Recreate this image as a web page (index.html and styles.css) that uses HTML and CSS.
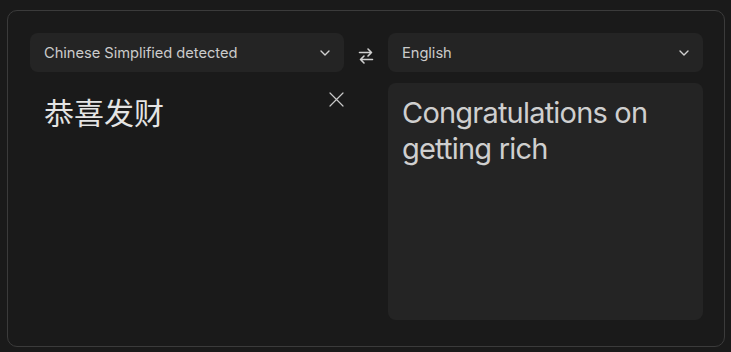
FILE: index.html
```html
<!DOCTYPE html>
<html lang="en">
<head>
<meta charset="utf-8">
<link rel="stylesheet" href="styles.css">
</head>
<body>
<div class="card">
  <div class="select">
    <span>Chinese Simplified detected</span>
    <svg class="chev" width="10" height="6" viewBox="0 0 10 6"><path d="M1 1l4 4 4-4" fill="none" stroke="#d0d0d0" stroke-width="1.4" stroke-linecap="round" stroke-linejoin="round"/></svg>
  </div>
  <div class="swap">
    <svg width="16" height="18" viewBox="0 0 16 18"><path d="M1.5 5.5h12M10 2l3.5 3.5L10 9M14.5 12.5h-12M6 9l-3.5 3.5L6 16" fill="none" stroke="#d0d0d0" stroke-width="1.6" stroke-linecap="round" stroke-linejoin="round"/></svg>
  </div>
  <div class="select">
    <span>English</span>
    <svg class="chev" width="10" height="6" viewBox="0 0 10 6"><path d="M1 1l4 4 4-4" fill="none" stroke="#d0d0d0" stroke-width="1.4" stroke-linecap="round" stroke-linejoin="round"/></svg>
  </div>
  <div class="source">
    <div class="src-text">恭喜发财</div>
    <svg class="close" width="15" height="15" viewBox="0 0 15 15"><path d="M1 1l13 13M14 1L1 14" stroke="#c8c8c8" stroke-width="1.2" stroke-linecap="round"/></svg>
  </div>
  <div></div>
  <div class="output">Congratulations on getting rich</div>
</div>
</body>
</html>
```
FILE: styles.css
```css
html, body { margin: 0; padding: 0; }
body {
  background: #1a1a1a;
  font-family: Inter, "Noto Sans", "Noto Sans CJK SC", sans-serif;
  color: #d2d2d2;
  width: 731px;
  height: 352px;
  overflow: hidden;
}
.card {
  box-sizing: border-box;
  margin: 10px 6px 0 7px;
  height: 337px;
  border: 1px solid #3b3b3b;
  border-radius: 10px;
  padding: 22px 21px 26px 22px;
  display: grid;
  grid-template-columns: 314px 44px 315px;
  grid-template-rows: 39px 237px;
  row-gap: 11px;
}
.select {
  background: #242424;
  border-radius: 8px;
  display: flex;
  align-items: center;
  justify-content: space-between;
  padding: 0 14px;
  font-size: 14.7px;
  letter-spacing: -0.05px;
  color: #cbcbcb;
}
.swap {
  display: flex;
  align-items: center;
  justify-content: center;
  padding-top: 7px;
}
.source {
  display: flex;
  justify-content: space-between;
  align-items: flex-start;
  padding: 6px 0 0 14px;
}
.src-text {
  font-family: "Noto Sans CJK SC", sans-serif;
  font-size: 30px;
  line-height: 44px;
  color: #e4e4e4;
}
.close { margin-top: 3px; }
.output {
  background: #242424;
  border-radius: 8px;
  padding: 12px 14px 10px;
  font-size: 29px;
  line-height: 36px;
  letter-spacing: -0.8px;
  color: #cfcfcf;
}
```
